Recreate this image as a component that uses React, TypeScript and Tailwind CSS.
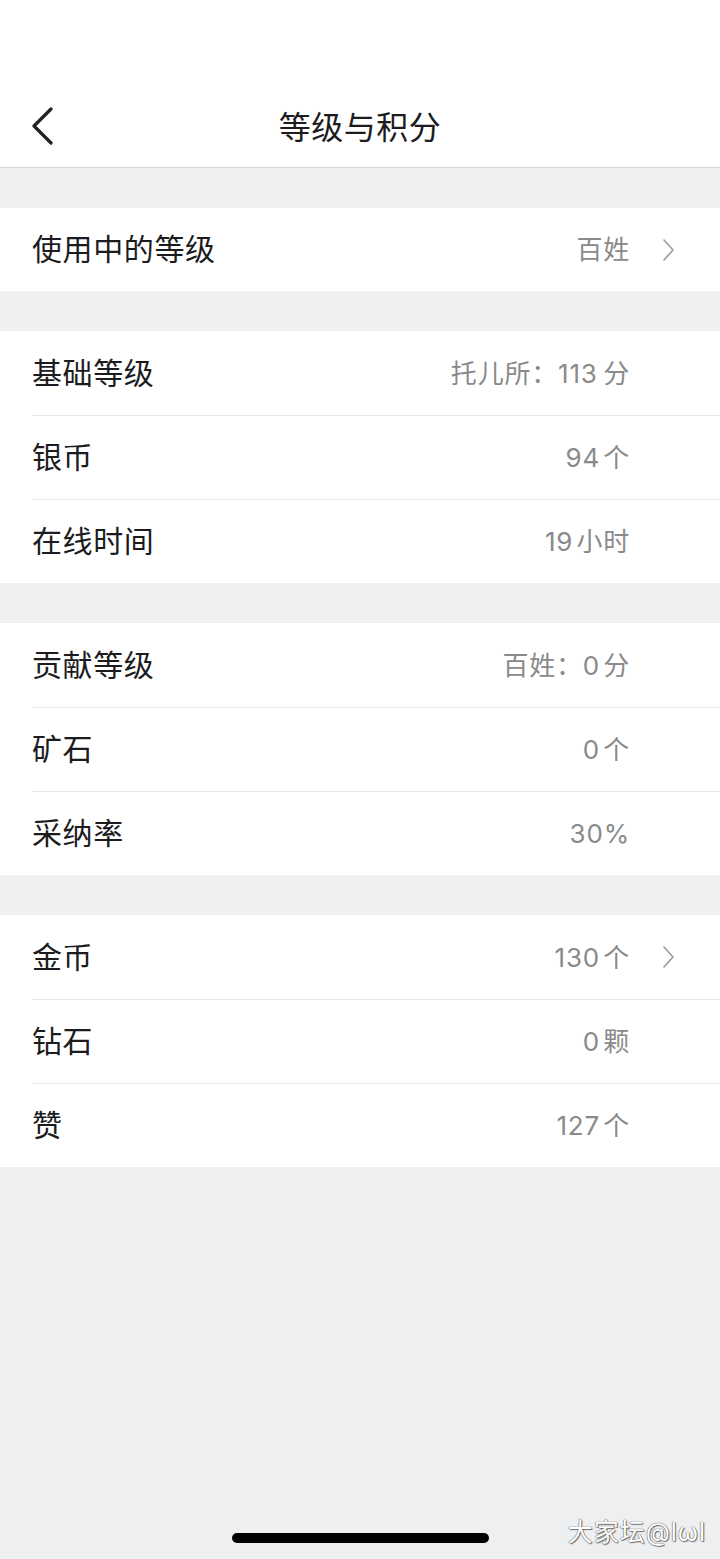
const font = { fontFamily: 'Inter, "Noto Sans CJK SC", sans-serif' };

type Item = { label: string; value: string; arrow?: boolean };

// hair space between number and unit, like the native app spacing
const hs = "\u200A";

const groups: Item[][] = [
  [{ label: "使用中的等级", value: "百姓", arrow: true }],
  [
    { label: "基础等级", value: "托儿所：113\u2009分" },
    { label: "银币", value: `94${hs}个` },
    { label: "在线时间", value: `19${hs}小时` },
  ],
  [
    { label: "贡献等级", value: `百姓：0${hs}分` },
    { label: "矿石", value: `0${hs}个` },
    { label: "采纳率", value: "30%" },
  ],
  [
    { label: "金币", value: `130${hs}个`, arrow: true },
    { label: "钻石", value: `0${hs}颗` },
    { label: "赞", value: `127${hs}个` },
  ],
];

function Chevron() {
  return (
    <svg width="14" height="24" viewBox="0 0 14 24" fill="none">
      <path d="M3 2 L12 12 L3 22" stroke="#9a9a9a" strokeWidth="1.6" strokeLinecap="round" strokeLinejoin="round" />
    </svg>
  );
}

function Row({ item, first, single }: { item: Item; first: boolean; single: boolean }) {
  return (
    <div className="bg-white pl-8">
      <div
        className={
          (single ? "h-[83px] " : "h-[84px] ") +
          "flex items-center " +
          (first ? "" : "border-t border-[#e6e6e8]")
        }
      >
        <div className="flex-1 text-[30px] text-[#1c1c1e] tracking-[0.6px]">{item.label}</div>
        <div className="text-[26px] text-[#8a8a8a] tracking-[0.8px] whitespace-pre">{item.value}</div>
        <div className="w-[90px] pl-[31px] flex items-center">{item.arrow && <Chevron />}</div>
      </div>
    </div>
  );
}

export default function App() {
  return (
    <div className="relative min-h-[1559px] bg-[#eeeff1]" style={font}>
      <div className="bg-white pt-[88px] border-b border-[#d8d8da]">
        <div className="h-[79px] flex items-center relative">
          <div className="absolute left-[28px] top-[19px]">
            <svg width="30" height="40" viewBox="0 0 30 40" fill="none">
              <path d="M23 2 L6 19 L23 36" stroke="#222" strokeWidth="3.2" strokeLinecap="round" strokeLinejoin="round" />
            </svg>
          </div>
          <div className="flex-1 text-center text-[32px] text-[#1c1c1e] tracking-[0.5px]">等级与积分</div>
        </div>
      </div>

      {groups.map((g, gi) => (
        <div key={gi} className="pt-10">
          {g.map((item, i) => (
            <Row key={i} item={item} first={i === 0} single={g.length === 1} />
          ))}
        </div>
      ))}

      <div className="absolute left-[232px] top-[1533px] w-[257px] h-[10px] rounded-full bg-black" />
      <div
        className="absolute right-[14px] top-[1514px] text-[25px] text-white tracking-[1px]"
        style={{ textShadow: "0 0 1px #555, 0 0 1px #555, 1px 1px 1px #777" }}
      >
        大家坛@lωl
      </div>
    </div>
  );
}
